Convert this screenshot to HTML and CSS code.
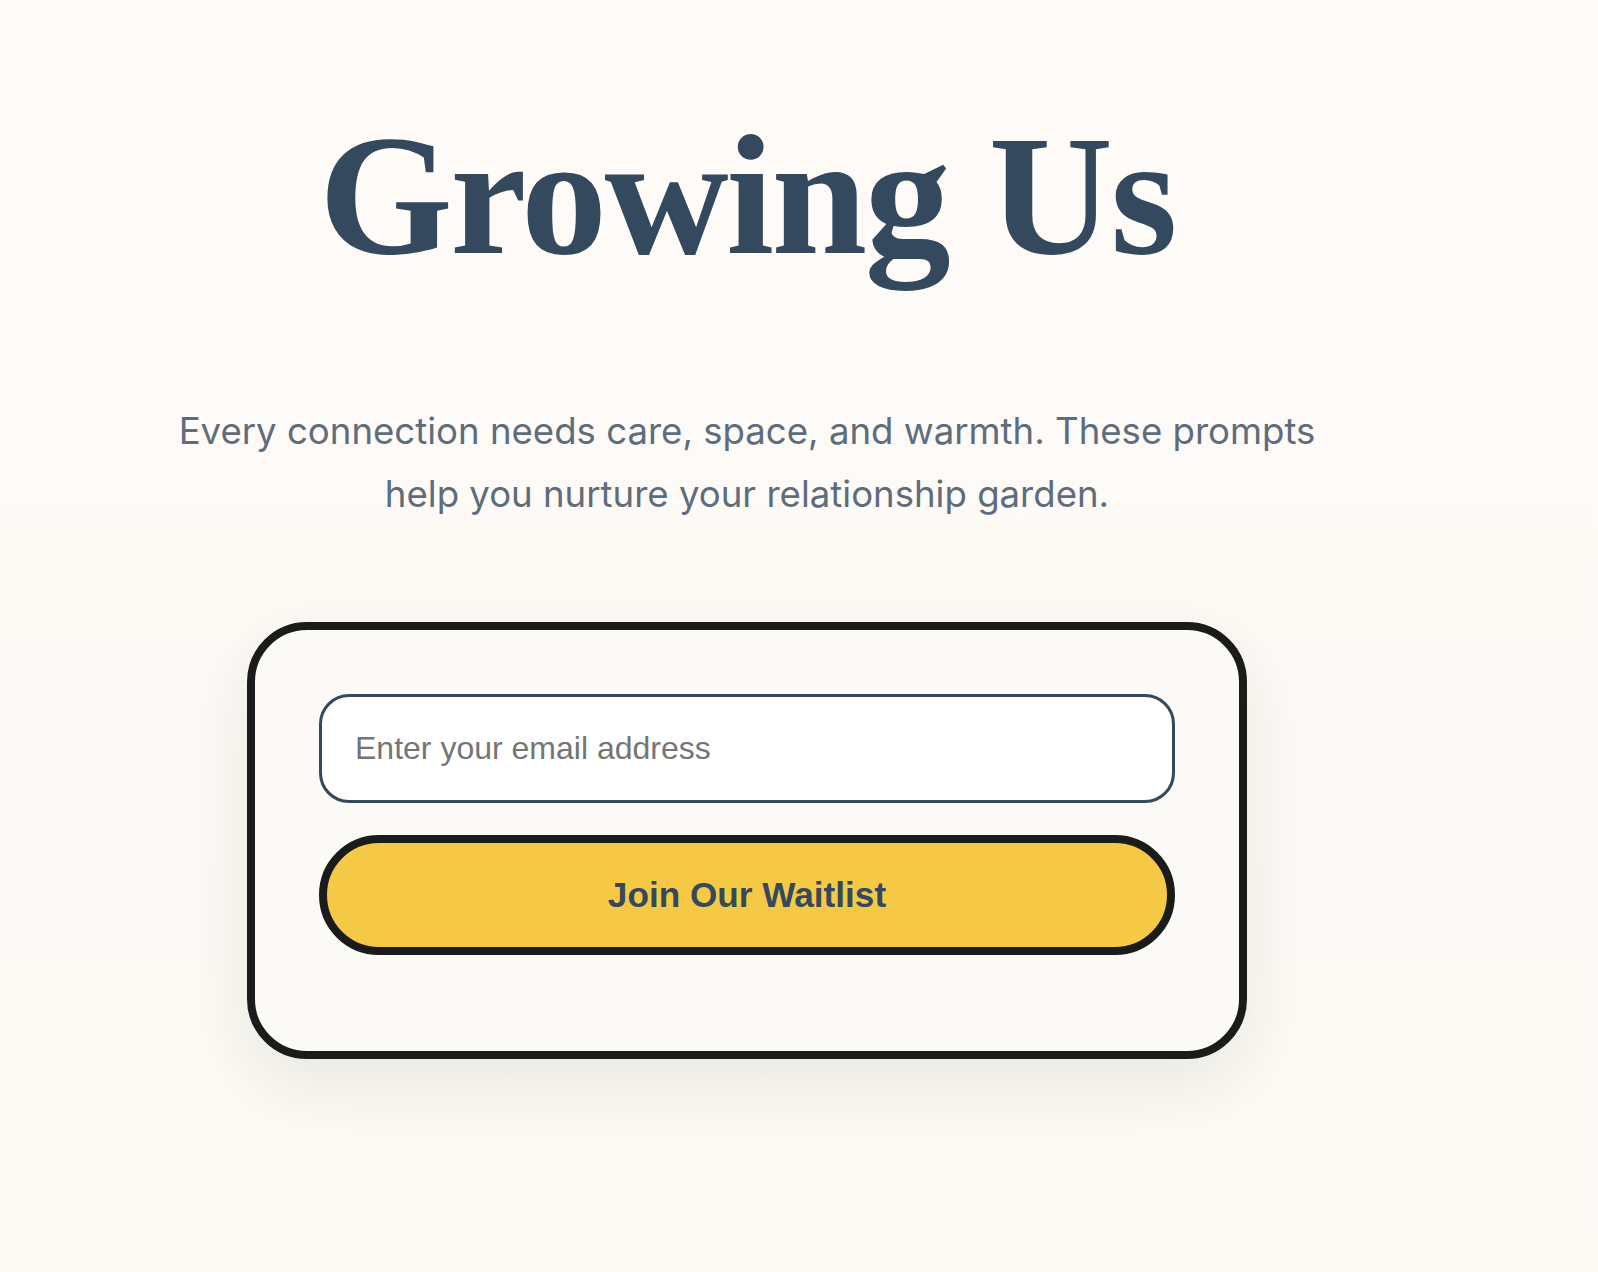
FILE: index.html
```html
<!DOCTYPE html>
<html lang="en">
<head>
<meta charset="utf-8">
<title>Growing Us</title>
<link rel="stylesheet" href="styles.css">
</head>
<body>
<main class="page">
  <h1 class="title">Growing Us</h1>
  <p class="lead">Every connection needs care, space, and warmth. These prompts help you nurture your relationship garden.</p>
  <form class="card" onsubmit="return false;">
    <input class="email" type="email" placeholder="Enter your email address">
    <button class="join" type="submit">Join Our Waitlist</button>
  </form>
</main>
</body>
</html>
```

FILE: styles.css
```css
html, body {
  margin: 0;
  padding: 0;
}
body {
  min-height: 1272px;
  background: linear-gradient(180deg, #fffbf8 0%, #fbfaf5 100%);
}
.page {
  display: flex;
  flex-direction: column;
  align-items: center;
  padding: 109px 104px 0 0;
}
.title {
  margin: 0;
  font-family: "Liberation Serif", "Times New Roman", serif;
  font-weight: 700;
  font-size: 172px;
  line-height: 1;
  letter-spacing: -2.5px;
  color: #34495e;
}
.lead {
  margin: 119px 0 0;
  max-width: 1190px;
  text-align: center;
  font-family: Inter, "Noto Sans", sans-serif;
  font-size: 36.6px;
  line-height: 63.4px;
  color: #5d6d7c;
}
.card {
  box-sizing: border-box;
  width: 1000px;
  margin-top: 95px;
  padding: 64px 64px 96px;
  display: flex;
  flex-direction: column;
  gap: 32px;
  background: #fbfaf6;
  border: 8px solid #1b1b1b;
  border-radius: 60px;
  box-shadow: 0 24px 70px rgba(40, 35, 20, 0.09);
}
.email {
  box-sizing: border-box;
  height: 109px;
  padding: 0 33px;
  border: 3px solid #34495e;
  border-radius: 30px;
  background: #ffffff;
  font-family: "Liberation Sans", Arial, sans-serif;
  font-size: 32px;
  color: #34495e;
  outline: none;
}
.email::placeholder {
  color: #757575;
}
.join {
  box-sizing: border-box;
  height: 120px;
  border: 8px solid #1b1b1b;
  border-radius: 60px;
  background: #f5c945;
  font-family: "Liberation Sans", Arial, sans-serif;
  font-weight: 700;
  font-size: 35.2px;
  color: #34495e;
  cursor: pointer;
}
```
